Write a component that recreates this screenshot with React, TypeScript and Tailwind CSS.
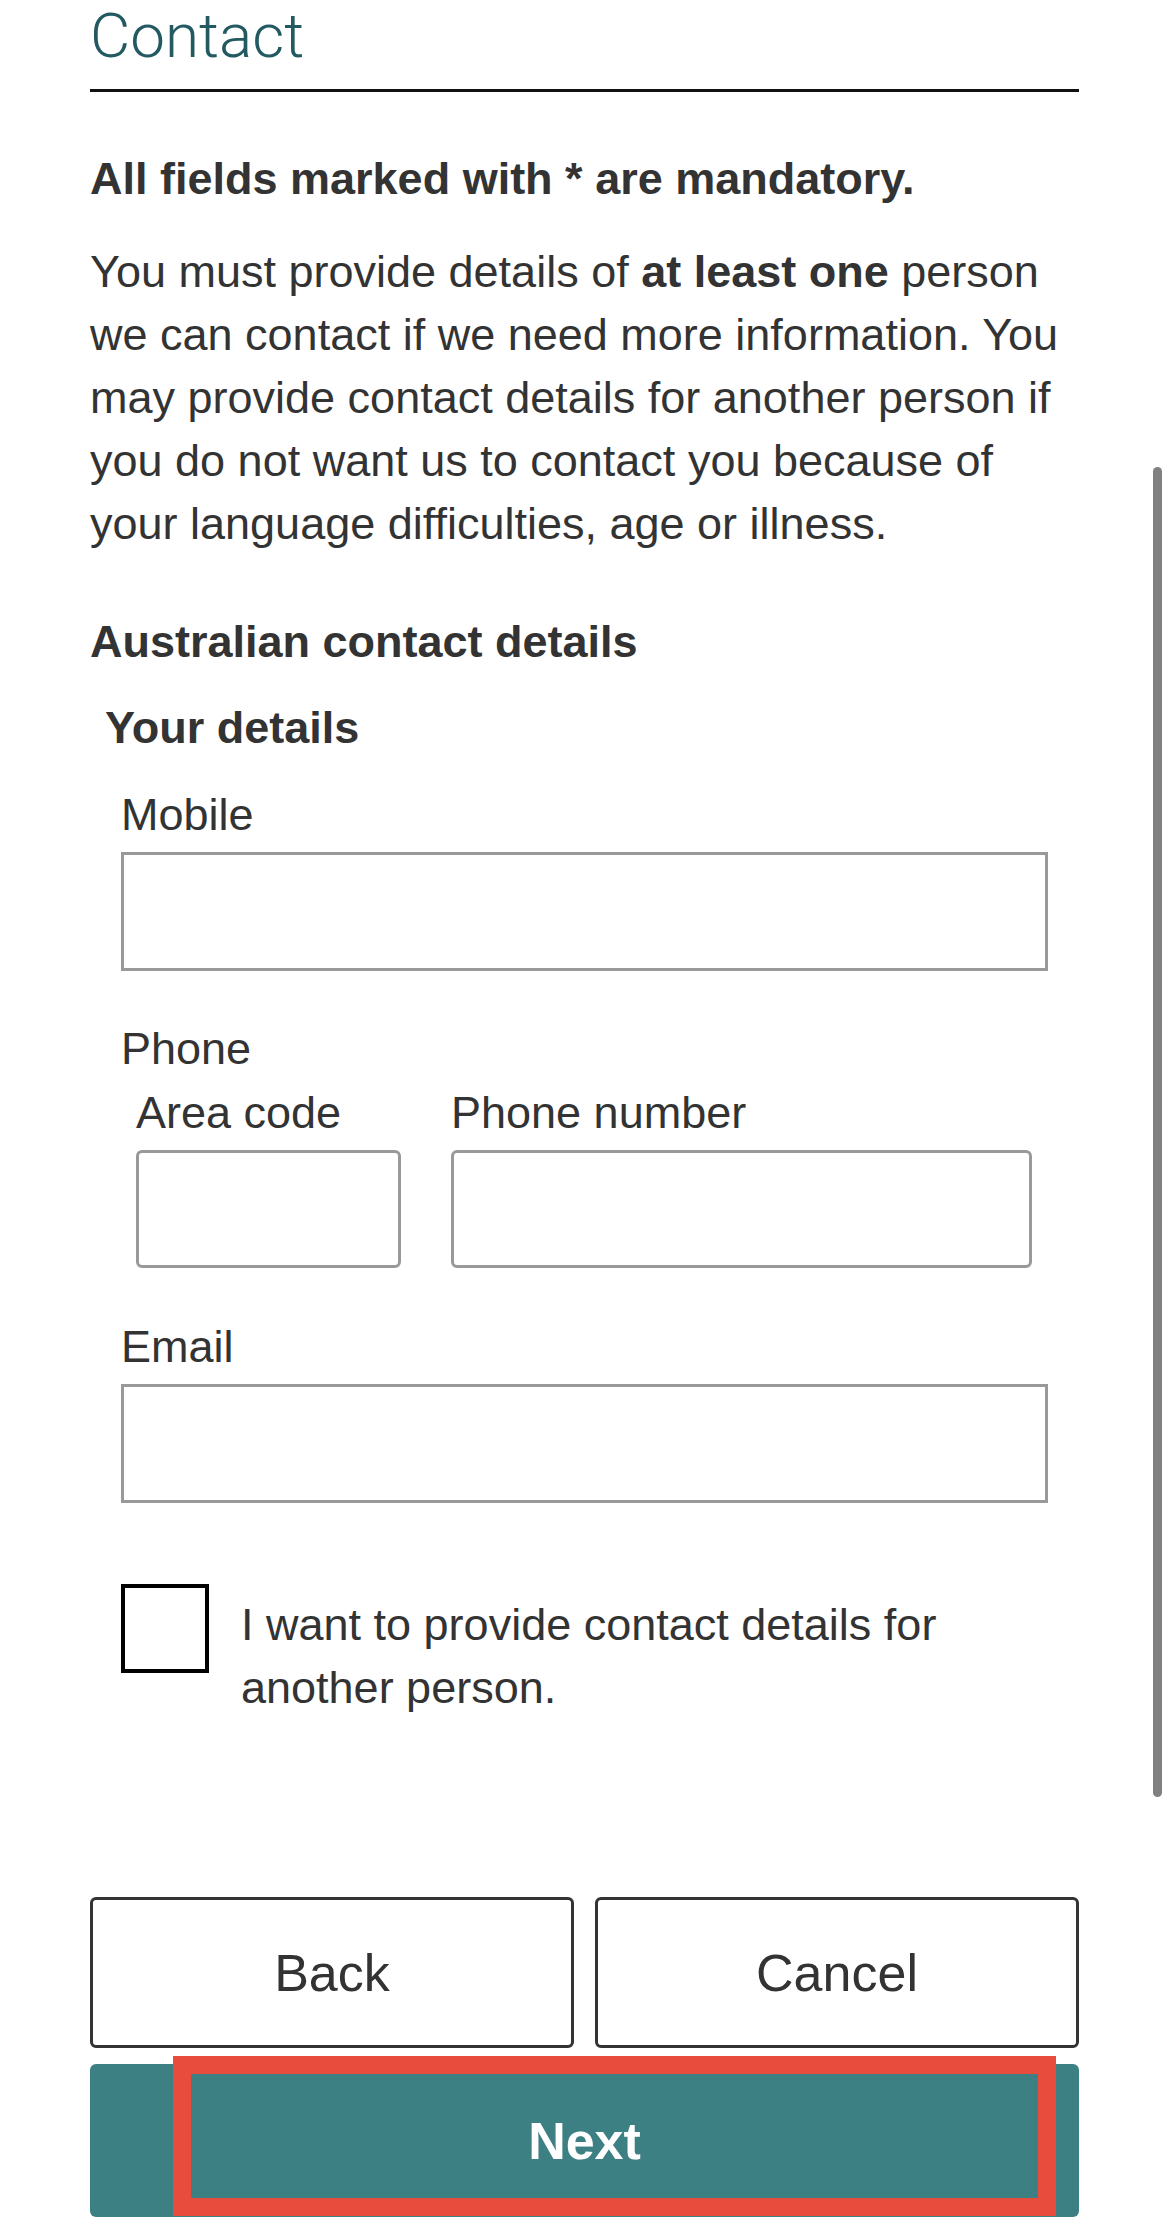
import React from "react";

const body = "font-['Liberation_Sans',Arial,sans-serif] text-[#333333]";

function Field({ label, className = "" }: { label: string; className?: string }) {
  return (
    <div className={className}>
      <div className="text-[45px] leading-[63px]">{label}</div>
      <div className="mt-[6px] h-[119px] w-full border-[3px] border-[#999999] bg-white" />
    </div>
  );
}

export default function App() {
  return (
    <div className={`relative h-[2232px] w-[1170px] overflow-hidden bg-white ${body}`}>
      <div className="pl-[90px] pr-[91px]">
        {/* Heading */}
        <div className="border-b-[3px] border-[#111111] pb-[17px]">
          <h1 className="font-['Roboto',sans-serif] text-[62px] font-light leading-[72px] text-[#235a61]">
            Contact
          </h1>
        </div>

        <p className="mt-[55px] text-[45px] font-bold leading-[63px]">
          All fields marked with * are mandatory.
        </p>

        <p className="mt-[30px] whitespace-nowrap text-[45px] leading-[63px]">
          You must provide details of <b>at least one</b> person
          <br />
          we can contact if we need more information. You
          <br />
          may provide contact details for another person if
          <br />
          you do not want us to contact you because of
          <br />
          your language difficulties, age or illness.
        </p>

        <h2 className="mt-[55px] text-[45px] font-bold leading-[63px]">Australian contact details</h2>

        <h3 className="mt-[23px] pl-[15px] text-[45px] font-bold leading-[63px]">Your details</h3>

        <div className="px-[31px]">
          <Field label="Mobile" className="mt-[24px]" />

          {/* Phone */}
          <div className="mt-[46px]">
            <div className="text-[45px] leading-[63px]">Phone</div>
            <div className="mt-[1px] flex gap-[50px] pl-[15px] pr-[16px]">
              <div className="w-[265px]">
                <div className="text-[45px] leading-[63px]">Area code</div>
                <div className="mt-[6px] h-[118px] rounded-[6px] border-[3px] border-[#999999]" />
              </div>
              <div className="flex-1">
                <div className="text-[45px] leading-[63px]">Phone number</div>
                <div className="mt-[6px] h-[118px] rounded-[6px] border-[3px] border-[#999999]" />
              </div>
            </div>
          </div>

          <Field label="Email" className="mt-[47px]" />

          {/* Checkbox */}
          <div className="mt-[81px] flex items-start gap-[32px]">
            <div className="h-[89px] w-[88px] shrink-0 border-[4px] border-black bg-white" />
            <div className="mt-[9px] whitespace-nowrap text-[45px] leading-[63px]">
              I want to provide contact details for
              <br />
              another person.
            </div>
          </div>
        </div>

        {/* Buttons */}
        <div className="mt-[178px] flex gap-[21px]">
          <button className="flex h-[151px] flex-1 items-center justify-center rounded-[6px] border-[3px] border-[#333333] bg-white text-[52px] text-[#333333]">
            Back
          </button>
          <button className="flex h-[151px] flex-1 items-center justify-center rounded-[6px] border-[3px] border-[#333333] bg-white text-[52px] text-[#333333]">
            Cancel
          </button>
        </div>

        <div className="relative mt-[16px]">
          <button className="flex h-[153px] w-full items-center justify-center rounded-[6px] bg-[#3d8084] text-[52px] font-bold text-white">
            Next
          </button>
          {/* highlight overlay */}
          <div className="pointer-events-none absolute -top-[8px] bottom-[1px] left-[83px] right-[23px] border-[18px] border-[#e84c3d]" />
        </div>
      </div>

      {/* scrollbar */}
      <div className="absolute left-[1153px] top-[467px] h-[1330px] w-[9px] rounded-full bg-[#808080]" />
    </div>
  );
}
